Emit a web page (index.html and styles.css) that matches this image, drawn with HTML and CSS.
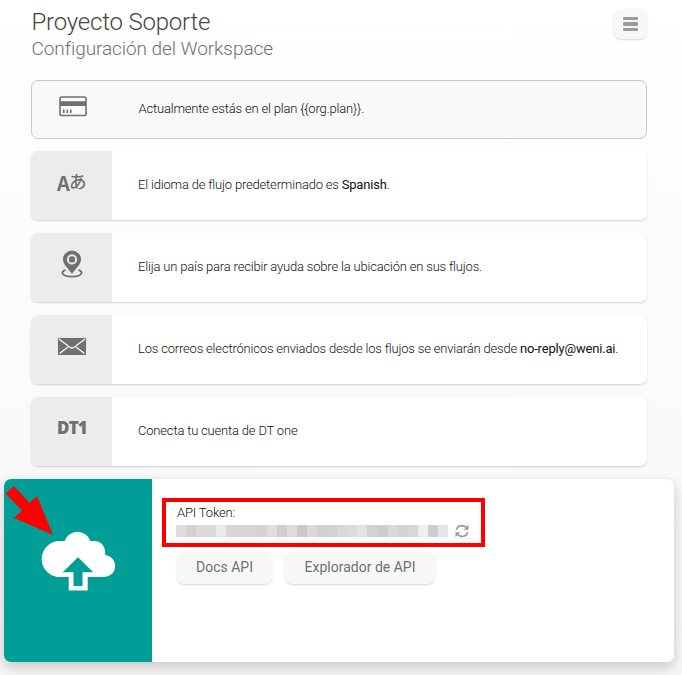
FILE: index.html
```html
<!DOCTYPE html>
<html lang="es">
<head>
<meta charset="utf-8">
<title>Proyecto Soporte</title>
<link rel="stylesheet" href="styles.css">
</head>
<body>
<header class="header">
  <div>
    <h1 class="title">Proyecto Soporte</h1>
    <h2 class="subtitle">Configuración del Workspace</h2>
  </div>
  <button class="menu" aria-label="Menú"><i></i><i></i><i></i></button>
</header>
<main>
  <section class="card plan">
    <div class="icon"><svg width="28" height="21" viewBox="0 0 28 21"><rect x="1" y="1" width="26" height="18.5" rx="1.5" fill="none" stroke="#707070" stroke-width="1.6"/><path d="M1 5.200h26v4.800H1zM4 13.500h1.600v3.500H4zM7.500 13.500h1.600v3.500H7.500zM11 13.500h1.600v3.500H11z" fill="#707070"/></svg></div>
    <p class="text">Actualmente estás en el plan {{org.plan}}.</p>
  </section>
  <section class="card">
    <div class="icon lang"><span class="latin">A</span><span class="kana">あ</span></div>
    <p class="text">El idioma de flujo predeterminado es <b>Spanish</b>.</p>
  </section>
  <section class="card">
    <div class="icon"><svg width="22" height="28" viewBox="0 0 22 28"><path fill="#707070" fill-rule="evenodd" d="M11 .5a9 9 0 0 0-9 9c0 5 5 8.500 9 14.500 4-6 9-9.500 9-14.500a9 9 0 0 0-9-9zm0 3.700a5.200 5.200 0 1 1 0 10.400 5.200 5.200 0 0 1 0-10.400z"/><circle cx="11" cy="9.400" r="3.200" fill="#707070"/><path d="M4.500 19.800C-1 22 .8 26.600 11 26.600s12-4.600 6.500-6.800" fill="none" stroke="#707070" stroke-width="1.800"/></svg></div>
    <p class="text">Elija un país para recibir ayuda sobre la ubicación en sus flujos.</p>
  </section>
  <section class="card">
    <div class="icon"><svg width="28" height="17" viewBox="0 0 28 17"><path fill="#707070" d="M0 0h28v17H0z"/><path d="M1 1l10.500 8q2.500 2 5 0L27 1M1.500 15.500l8.500-6.500M26.500 15.500l-8.500-6.500" fill="none" stroke="#f4f4f4" stroke-width="1.400"/></svg></div>
    <p class="text">Los correos electrónicos enviados desde los flujos se enviarán desde <b>no-reply@weni.ai</b>.</p>
  </section>
  <section class="card">
    <div class="icon dt">DT1</div>
    <p class="text">Conecta tu cuenta de DT one</p>
  </section>
  <section class="api">
    <div class="api-icon">
      <svg width="148" height="183" viewBox="0 0 148 183"><path fill="#fff" d="M55.700 98a18 18 0 0 1 0-36H60.700a13.460 13.460 0 0 1 25.600 0H90c7.500 0 12 6 11.200 13.900A11.100 11.100 0 0 1 98.800 98H83.700v13.500H64.700V98z"/><path fill="#009e96" d="M74 78.300l15.300 15H78.500V107H69.500V93.300H58.700z"/><path fill="red" d="M1.500 14.500l8.500-7.500 15.500 17 7.500-7L49 56 10 39l8-7.500z"/></svg>
    </div>
    <div class="api-body">
      <div class="token">
        <p class="label">API Token:</p>
        <div class="token-row"><div class="mosaic"></div>
        <svg width="14" height="14" viewBox="0 0 14 14"><path d="M1.300 5.800C2.500 1.300 8 .3 11.200 3.400M12.700 8.200C11.500 12.700 6 13.700 2.800 10.600" fill="none" stroke="#999" stroke-width="1.600"/><path fill="#999" d="M13.500.8v4.900H8.600zM.5 13.200V8.300h4.900z"/></svg></div>
      </div>
      <div class="buttons"><button class="btn">Docs API</button><button class="btn explorer">Explorador de API</button></div>
    </div>
  </section>
</main>
</body>
</html>
```
FILE: styles.css
```css
* { box-sizing: border-box; }
body { margin: 0; height: 675px; overflow: hidden; font-family: Roboto, "Liberation Sans", sans-serif; font-weight: 300; background: linear-gradient(#fff, #f7f7f7); }
h1, h2, p { margin: 0; font-weight: 300; }
.header { height: 80px; padding: 8px 35px 0 31.500px; display: flex; justify-content: space-between; align-items: flex-start; }
.title { font-size: 24px; line-height: 28px; letter-spacing: -.2px; color: #444; white-space: nowrap; }
.subtitle { font-size: 19px; line-height: 26px; letter-spacing: -.07px; color: #707070; white-space: nowrap; }
button { border: 0; background: #f7f7f7; border-radius: 7px; box-shadow: 0 1px 2px rgba(0,0,0,.15); font-family: inherit; }
.menu { width: 33px; height: 30px; margin-top: 1px; padding: 0; display: flex; flex-direction: column; align-items: center; justify-content: center; gap: 2px; }
.menu i { width: 15px; height: 3.500px; border-radius: 1px; background: #9b9b9b; }
.card { height: 69px; margin: 0 35px 13px 30.500px; display: flex; background: #fff; border-radius: 7px; overflow: hidden; box-shadow: 0 1px 2px rgba(0,0,0,.17); }
.icon { width: 81.500px; padding: 0 0 7px 1.500px; background: #ececec; display: flex; align-items: center; justify-content: center; color: #707070; }
.plan { height: 59px; margin: 0 35px 12px 31px; border: 1px solid #c8c8c8; background: #f9f9f9; box-shadow: none; }
.plan .icon { width: 80px; background: none; padding: 0 0 6px 2px; }
.text { margin-left: 26px; align-self: center; padding-bottom: 1px; font-size: 13px; line-height: 18px; letter-spacing: -.185px; color: #111; white-space: nowrap; }
.plan .text { margin-left: 26.500px; }
.text b { font-weight: 400; }
.latin { font: 700 20px/20px "Noto Sans CJK JP", sans-serif; padding-top: 1px; width: 12px; }
.kana { font: 500 17.500px/16px "Noto Sans CJK JP", sans-serif; margin-bottom: 3px; }
.lang { padding-left: 1px; }
.dt { font: 800 17px/20px "Open Sans", sans-serif; letter-spacing: -.8px; }
.api { width: 670px; height: 183px; margin-left: 4px; display: flex; background: #fff; border-radius: 7px; box-shadow: 0 5px 14px rgba(0,0,0,.2); }
.api-icon { width: 148px; background: #009e96; border-radius: 7px 0 0 7px; }
.api-icon svg { display: block; }
.api-body { padding: 19px 0 0 10px; }
.token { width: 323px; height: 49px; border: 4px solid red; padding: 2px 0 0 10px; }
.label { font-size: 13px; line-height: 18px; letter-spacing: -.17px; padding-left: 1px; color: #111; }
.token-row { display: flex; gap: 6.500px; align-items: center; height: 14px; margin-top: 2px; }
.mosaic { width: 272px; height: 12px; background: linear-gradient(90deg, #dedddb 10px, #d3d2d3 0 20px, #dcdadc 0 30px, #dadbdb 0 40px, #e9ebed 0 50px, #d9d5d8 0 60px, #d7d5d8 0 80px, #d4d4d4 0 91px, #e0dfdc 0 101px, #cfcfd1 0 111px, #dcdcdd 0 121px, #cbcac9 0 131px, #dadadd 0 141px, #d0d0d0 0 151px, #d2d3d1 0 161px, #dad9d7 0 171px, #dbdce1 0 181px, #e2e2e2 0 191px, #d1d3d1 0 201px, #cdcdcd 0 212px, #dad9dc 0 222px, #d6d4d3 0 232px, #d6d8d6 0 242px, #efefed 0 252px, #cdcdcf 0 262px, #e5e6ec 0); }
.buttons { display: flex; gap: 13px; padding: 5px 0 0 15px; }
.btn { width: 95px; height: 32px; padding: 0 0 3px; font-size: 14px; font-weight: 400; color: #707070; white-space: nowrap; }
.explorer { width: 150px; }
```
